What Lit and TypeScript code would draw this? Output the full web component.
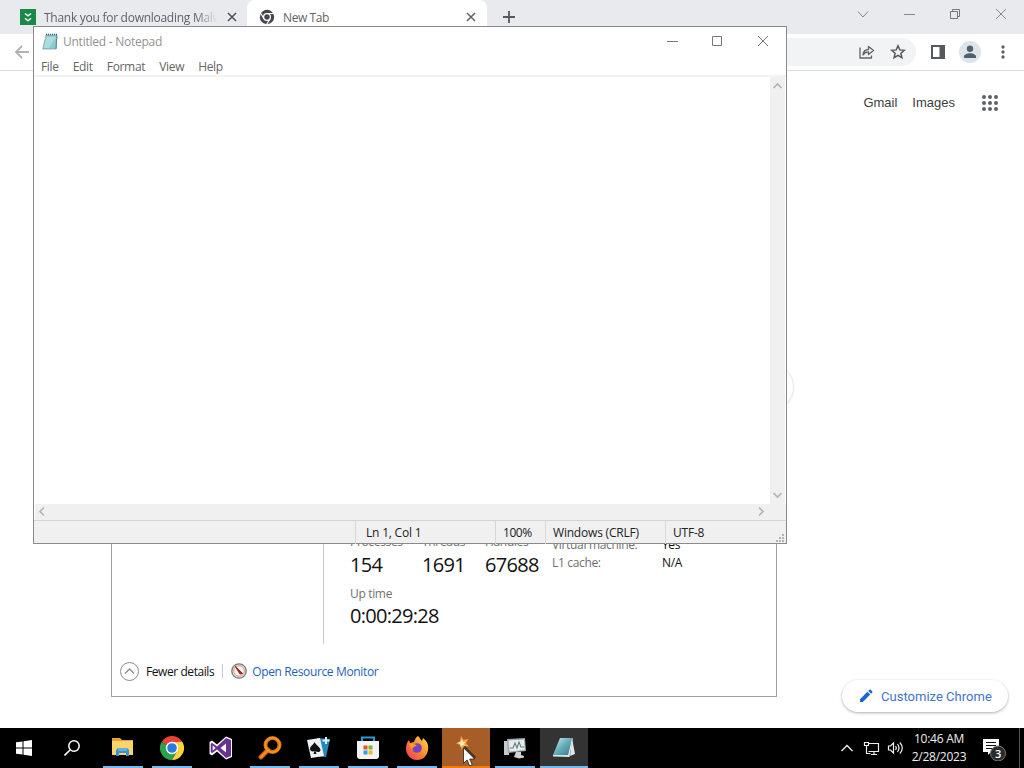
import { LitElement, html, svg, css } from "lit";
import { customElement } from "lit/decorators.js";

const ui = css`
  :host { display: block; box-sizing: border-box; font-family: "Open Sans", "Noto Sans", sans-serif; font-size: 12px; letter-spacing: -0.35px; white-space: nowrap; }
  * { box-sizing: border-box; }
  svg { display: block; flex: none; }
`;

@customElement("browser-window")
class BrowserWindow extends LitElement {
  static styles = [ui, css`
    :host { display: flex; flex-direction: column; background: #fff; height: 728px; }
    .tabs { display: flex; height: 34px; background: #e8eaed; color: #5f6368; align-items: stretch; }
    .tab { display: flex; align-items: center; width: 247px; padding: 0 10px 0 20px; }
    .tab.on { width: 240px; background: #fff; border-radius: 8px 8px 0 0; padding: 0 11px 0 12px; }
    .label { flex: 1; margin: 0 10px 0 8px; overflow: hidden; letter-spacing: -0.4px; }
    .long { letter-spacing: -0.27px; -webkit-mask-image: linear-gradient(90deg, #000 88%, transparent); }
    .plus { margin: 10px 0 0 15px; }
    .controls { display: flex; margin: 8px 17px 0 auto; gap: 34px; }
    .toolbar { display: flex; align-items: center; height: 37px; border-bottom: 1px solid #dadce0; padding: 0 17px 0 14px; }
    .omni { display: flex; align-items: center; justify-content: flex-end; gap: 14px; flex: 1; height: 28px; border-radius: 14px; background: #f1f3f4; margin: 0 14px 0 80px; padding-right: 10px; }
    .avatar { margin-left: 13px; }
    .dots { margin-left: 18px; }
    .links { display: flex; align-items: center; justify-content: flex-end; height: 64px; padding-right: 25px; font: 13px "Liberation Sans", Arial, sans-serif; letter-spacing: 0; color: #3c3e41; }
    .links span { margin: 0 15px 2px 0; }
    .links svg { margin-left: 11px; }
    .search { width: 564px; height: 46px; border: 1px solid #e6e7ea; box-shadow: 0 1px 2px rgba(0,0,0,.08); border-radius: 23px; margin: 229px 0 0 230px; }
    .pill { display: flex; align-items: center; gap: 7px; width: 166px; height: 32px; border-radius: 16px; background: #fff; box-shadow: 0 1px 3px rgba(0,0,0,.32); color: #4274cb; font: 13px Roboto, sans-serif; letter-spacing: .02px; margin: auto 16px 16px auto; padding-left: 16px; }
  `];
  render() {
    const x = (c: string) => svg`<path d="M1 1l8 8M9 1l-8 8" stroke=${c} stroke-width="1.500"/>`;
    return html`
      <div class="tabs">
        <div class="tab">
          <svg width="16" height="16"><path fill="#178a49" d="M0 0h16v16H0z"/><path fill="none" stroke="#fff" stroke-width="1.500" d="M5 4.500l3 2.300 3-2.300M5 9.200l3 2.600 3-2.600"/></svg>
          <span class="label long">Thank you for downloading Malw</span>
          <svg width="10" height="10">${x("#4d5156")}</svg>
        </div>
        <div class="tab on">
          <svg width="16" height="16" viewBox="0 0 16 16"><circle cx="8" cy="8" r="7.200" fill="#44474b"/><circle cx="8" cy="8" r="3.400" fill="none" stroke="#fff" stroke-width="1.300"/><path d="M8 4.500h7M4.900 9.800L1.500 4M11 9.800L7.600 15.500" stroke="#fff" stroke-width="1.200"/></svg>
          <span class="label">New Tab</span>
          <svg width="10" height="10">${x("#5f6368")}</svg>
        </div>
        <svg class="plus" width="14" height="14"><path d="M7 1v12M1 7h12" stroke="#55585c" stroke-width="1.800"/></svg>
        <div class="controls">
          <svg width="12" height="12"><path d="M1 3.500l5 5.500 5-5.500" fill="none" stroke="#85878a"/></svg>
          <svg width="12" height="12"><path d="M1 6.500h11" stroke="#85878a"/></svg>
          <svg width="12" height="12"><path d="M1.500 3.500h7v7h-7zM3.500 3.500v-2h7v7h-2" fill="none" stroke="#77797c"/></svg>
          <svg width="12" height="12"><path d="M1 1l10 10M11 1L1 11" stroke="#85878a"/></svg>
        </div>
      </div>
      <div class="toolbar">
        <svg width="16" height="16"><path d="M15 8H2M8 2L2 8l6 6" fill="none" stroke="#afb1b4" stroke-width="1.800"/></svg>
        <div class="omni">
          <svg width="18" height="16" viewBox="0 0 18 16"><path d="M2 3.500V14h11.500v-2.500M5 11c.3-3.800 2.300-5.500 5.500-5.500V2.500L15.500 6.500l-5 4V7.900C8 7.900 6.300 8.700 5 11z" fill="none" stroke="#5f6368" stroke-width="1.300" stroke-linejoin="round"/></svg>
          <svg width="16" height="16" viewBox="0 0 16 16"><path d="M8 1.800l1.800 4.100 4.500.4-3.400 3 1 4.400L8 11.400l-3.900 2.300 1-4.400-3.400-3 4.500-.4z" fill="none" stroke="#55585c" stroke-width="1.500"/></svg>
        </div>
        <svg width="16" height="16"><path d="M2 2h12v12H2z" fill="none" stroke="#55585c" stroke-width="2"/><path d="M9.500 2H14v12H9.500z" fill="#55585c"/></svg>
        <svg class="avatar" width="22" height="22"><circle cx="11" cy="11" r="11" fill="#dee5ea"/><circle cx="11" cy="7.700" r="3.200" fill="#50606e"/><path d="M5 17v-1.500c0-2 3-3.300 6-3.300s6 1.300 6 3.300V17z" fill="#50606e"/></svg>
        <svg class="dots" width="8" height="16" fill="#5f6368"><circle cx="4" cy="3" r="1.700"/><circle cx="4" cy="8" r="1.700"/><circle cx="4" cy="13" r="1.700"/></svg>
      </div>
      <div class="links"><span>Gmail</span><span>Images</span>
        <svg width="18" height="18" fill="#5f6368">${[3, 9, 15].map(y => [3, 9, 15].map(cx => svg`<circle cx=${cx} cy=${y} r="2"/>`))}</svg>
      </div>
      <div class="search"></div>
      <div class="pill"><svg width="16" height="16"><path d="M2 14v-2.800l7.400-7.400 2.800 2.800L4.800 14zM10.300 2.900l1.100-1.100c.4-.4.900-.4 1.300 0l1.500 1.500c.4.4.4.900 0 1.300l-1.100 1.100z" fill="#1967d2"/></svg>Customize Chrome</div>`;
  }
}

@customElement("task-manager")
class TaskManager extends LitElement {
  static styles = [ui, css`
    :host { display: flex; flex-direction: column; background: #fff; border: 1px solid #a0a0a0; color: #111; }
    .main { display: flex; height: 144px; }
    .side { width: 212px; border-right: 1px solid #c8c8c8; }
    .stats { display: grid; grid-template-columns: 72px 63px 67px; grid-template-rows: 18px 34px 17px 26px; margin: 33px 0 0 26px; line-height: 16px; }
    .k { color: #707070; letter-spacing: -.33px; }
    .stats .k { padding-top: 1px; }
    .v { font-size: 20px; line-height: 24px; padding-top: 2px; letter-spacing: -.7px; }
    .stats .wide { grid-column: 1 / 4; }
    .info { display: grid; grid-template-columns: 110px 60px; grid-auto-rows: 18px; margin-top: 36px; line-height: 18px; align-content: start; }
    .foot { display: flex; align-items: center; height: 52px; padding: 2px 0 0 8px; }
    .sep { width: 1px; height: 14px; background: #c9c9c9; margin: 0 8px; }
    .link { color: #1d63b5; margin-left: 5px; letter-spacing: -.36px; }
    .few { margin-left: 7px; letter-spacing: -.43px; }
  `];
  render() {
    return html`
      <div class="main">
        <div class="side"></div>
        <div class="stats">
          <span class="k">Processes</span><span class="k">Threads</span><span class="k">Handles</span>
          <span class="v">154</span><span class="v">1691</span><span class="v">67688</span>
          <span class="k wide">Up time</span><span class="v wide">0:00:29:28</span>
        </div>
        <div class="info"><span class="k">Virtual machine:</span><span>Yes</span><span class="k">L1 cache:</span><span>N/A</span></div>
      </div>
      <div class="foot">
        <svg width="19" height="19"><circle cx="9.500" cy="9.500" r="9" fill="none" stroke="#8c8c8c"/><path d="M5 11.500l4.500-4.500 4.500 4.500" fill="none" stroke="#8c8c8c" stroke-width="1.300"/></svg>
        <span class="few">Fewer details</span><span class="sep"></span>
        <svg width="16" height="16"><circle cx="8" cy="8" r="7.200" fill="#eee5df" stroke="#777" stroke-width="1.300"/><circle cx="8" cy="8" r="5.300" fill="#f8f4ef" stroke="#c69e8c"/><path d="M4.300 3.500L11.500 10.500 9 11z" fill="#a41b1b" stroke="#a41b1b"/></svg>
        <span class="link">Open Resource Monitor</span>
      </div>`;
  }
}

@customElement("notepad-window")
class NotepadWindow extends LitElement {
  static styles = [ui, css`
    :host { display: flex; flex-direction: column; background: #fff; border: 1px solid #8a8a8a; color: #666; }
    .title { display: flex; height: 30px; align-items: center; padding: 0 17px 2px 8px; color: #929292; }
    .title span { margin: 0 auto 0 5px; letter-spacing: -.25px; }
    .title svg + svg { margin-left: 34px; }
    .title .min { margin-right: -1px; }
    .menu { display: flex; gap: 14px; height: 20px; padding-left: 7px; line-height: 20px; letter-spacing: -.32px; border-bottom: 2px solid #f3f3f3; }
    .body { display: grid; grid-template-columns: 1fr 16px; grid-template-rows: 427px 16px; flex: 1; padding: 0 0 0 1px; }
    .bar { display: flex; background: #f0f0f0; justify-content: space-between; }
    .v { flex-direction: column; padding: 4px 2px 4px 1px; margin-right: 1px; }
    .h { grid-column: 1 / 3; align-items: center; padding: 0 20px 2px 2px; }
    .status { display: grid; grid-template-columns: 322px 140px 50px 120px 1fr; height: 23px; border-top: 1px solid #d4d4d4; background: #f0f0f0; color: #222; line-height: 23px; letter-spacing: -.2px; }
    .status > * { padding-left: 7px; border-right: 1px solid #d7d7d7; }
    .status .pos { padding-left: 10px; }
    .status .zoom { letter-spacing: -.45px; }
    .status .end { display: flex; border: 0; justify-content: space-between; }
    .end svg { align-self: flex-end; }
  `];
  render() {
    const a = (d: string) => svg`<path d=${d} fill="none" stroke="#b4b4b4" stroke-width="1.700"/>`;
    return html`
      <div class="title">
        <svg width="16" height="17" viewBox="0 0 16 17"><path d="M4 2h11l-1 14H.8z" fill="#8accd0" stroke="#7ba9ae" stroke-width=".8"/><path d="M4 4h10L7 15H2z" fill="#b9e3e4" opacity=".7"/><path d="M14.800 2.500L14 16" stroke="#5f888d"/><path d="M4 1.500h11" stroke="#455" stroke-width="1.500" stroke-dasharray="1 1"/></svg>
        <span>Untitled - Notepad</span>
        <svg class="min" width="12" height="12"><path d="M1 6.500h11" stroke="#777"/></svg>
        <svg width="12" height="12"><path d="M1.500 1.500h9v9h-9z" fill="none" stroke="#777"/></svg>
        <svg width="12" height="12"><path d="M1 1l10 10M11 1L1 11" stroke="#777"/></svg>
      </div>
      <div class="menu"><span>File</span><span>Edit</span><span>Format</span><span>View</span><span>Help</span></div>
      <div class="body">
        <div></div>
        <div class="bar v"><svg width="12" height="9">${a("M2.500 7l4-4 4 4")}</svg><svg width="12" height="9">${a("M2.500 2l4 4 4-4")}</svg></div>
        <div class="bar h"><svg width="9" height="12">${a("M7 2.500L3 6.500l4 4")}</svg><svg width="9" height="12">${a("M2 2.500l4 4-4 4")}</svg></div>
      </div>
      <div class="status"><span></span><span class="pos">Ln 1, Col 1</span><span class="zoom">100%</span><span>Windows (CRLF)</span>
        <span class="end">UTF-8<svg width="10" height="10" fill="#b4b4b4"><path d="M6 0h2v2H6zM3 3h2v2H3zM6 3h2v2H6zM0 6h2v2H0zM3 6h2v2H3zM6 6h2v2H6z"/></svg></span>
      </div>`;
  }
}

const apps = [
  { state: "run", icon: svg`<path d="M1 2h8l2 2h11v15H1z" fill="#e0a63a"/><path d="M1 5h21v14H1z" fill="#fbd469"/><path d="M5 20v-6l2-2h9l2 2v6h-3v-3H8v3z" fill="#3d91d1"/><path d="M7 12h9v3H7z" fill="#5eb1e4"/>` },
  { state: "run", icon: svg`<path d="M12 12L1.600 6A12 12 0 0 1 22.400 6z" fill="#e94335"/><path d="M12 12L1.600 6A12 12 0 0 0 12 24l5.200-9z" fill="#2ba24c"/><path d="M12 6h10.400A12 12 0 0 1 12 24l5.200-9z" fill="#fdd23f"/><circle cx="12" cy="12" r="6.200" fill="#fff"/><circle cx="12" cy="12" r="4.800" fill="#2f78de"/>` },
  { state: "", icon: svg`<path d="M17 .5l6 2.500v18l-6 2.500-9-8-5 4-2.500-1.500v-12L3 4.500l5 4z" fill="#fff"/><path d="M17 2l5 2v16l-5 2-9-8.500-5 3.800L1.700 16V8L3 6.700l5 3.800zM17 7.500L11.500 12l5.500 4.500zM3.700 9.500v5L6.500 12z" fill="#68338e" fill-rule="evenodd"/>` },
  { state: "run", icon: svg`<path d="M10 14l-7 7" stroke="#b94d08" stroke-width="5" stroke-linecap="round"/><circle cx="14.500" cy="9" r="7" fill="none" stroke="#d66c0b" stroke-width="4"/><path d="M10 14l-7 7" stroke="#f48b20" stroke-width="3" stroke-linecap="round"/><circle cx="14.500" cy="9" r="7.200" fill="none" stroke="#f79325" stroke-width="2"/>` },
  { state: "run", icon: svg`<path d="M10 2l13 1-4 18-12-1z" fill="#2389bd"/><path d="M0 4l13-2 4 18-13 2z" fill="#eef2f4"/><path d="M7.500 6c1 3 6 5 6 8 0 2-3 3-5 1l1 3h-3l1-3c-2 1-4.500 0-4.500-2 0-3 3.500-4 4.500-7z" fill="#111"/><path d="M19 1v7M15.500 4.500h7" stroke="#d9f5ff" stroke-width="2"/>` },
  { state: "run", icon: svg`<path d="M6 6V1.500h12V6" fill="none" stroke="#279bd5" stroke-width="2"/><path d="M1 5h22v15q0 3-3 3H4q-3 0-3-3z" fill="#f1f3f5"/><path d="M7.500 9.500h4V13.500h-4z" fill="#e9532d"/><path d="M12.500 9.500h4v4h-4z" fill="#7bb62d"/><path d="M7.500 14.500h4v4h-4z" fill="#28a1df"/><path d="M12.500 14.500h4v4h-4z" fill="#f5b72b"/>` },
  { state: "run", icon: svg`<defs><linearGradient id="ff" x1="1" y1="0" x2="0" y2="1"><stop stop-color="#ffe34b"/><stop offset=".5" stop-color="#ff872a"/><stop offset="1" stop-color="#f02f65"/></linearGradient></defs><path d="M13 0c2 2 2 3 4 5l1-3c4 3 6 7 5 12-1 6-5 10-11 10S1 19 1 13c0-4 1-7 3-9l1 3 4-1c1-3 2-5 4-6z" fill="url(#ff)"/><circle cx="12" cy="12" r="4.800" fill="#7542c7"/><path d="M4 8c4-1 6 0 8 2-3 0-4 1-5 4z" fill="#ff9e22"/>` },
  { state: "alert", icon: svg`<path d="M10 11l11 11" stroke="#493325" stroke-width="3"/><path d="M7 0l2.500 4 5-1-2.500 4 3 3.500-4.500-.5-3 4-1-5-4.500-1.500L6 5z" fill="#f79f41"/><path d="M8 3l1 3 3-.500-2 2.200 1 2-2.500-.7-2 2-.3-2.800L4 7l2.500-1z" fill="#fff0bf"/>` },
  { state: "run", icon: svg`<path d="M1 5h5v14H1z" fill="#c5cacb"/><path d="M4 3l18-1 1 13-18 2z" fill="#9fa7aa"/><path d="M5.500 4.500l15.500-1 .7 10.500-15.200 1.500z" fill="#e6ecec"/><path d="M7 12h3l2-5 2 5 2-6 2 5h3" fill="none" stroke="#617d84" stroke-width="1.100"/><path d="M13 16h5v3l3 1v1.500l-5 1-5-1.500z" fill="#d0d4d5"/>` },
  { state: "on", icon: svg`<defs><linearGradient id="np" x1="0" y1="0" x2="1" y2="1"><stop stop-color="#d7eef3"/><stop offset=".5" stop-color="#65aeb9"/><stop offset="1" stop-color="#327c8c"/></linearGradient></defs><path d="M20 2l3 16-5 2z" fill="#e2e7e8"/><path d="M8 2h12l-4 17H1z" fill="url(#np)"/><path d="M1 19h15l4-17 .8.500L17.500 21 1 20.500z" fill="#dce5e7"/>` },
];

@customElement("task-bar")
class TaskBar extends LitElement {
  static styles = [ui, css`
    :host { display: flex; height: 40px; background: #000; color: #eee; }
    .cell { display: flex; width: 48px; align-items: center; justify-content: center; }
    .apps { display: flex; gap: 1px; margin-left: 3px; }
    .app { display: grid; grid-template-rows: 38px 2px; width: 48px; place-items: center; }
    .app svg { margin-top: 2px; }
    .app i { width: 40px; height: 2px; }
    .run i { background: #76b9ed; }
    .on { background: #333; }
    .on i { width: 48px; background: #76b9ed; }
    .alert { background: #a65d27; }
    .alert i { width: 48px; background: #f07a13; }
    .tray { display: flex; align-items: center; margin-left: auto; }
    .net { margin-left: 10px; }
    .vol { margin-left: 7px; }
    .clock { width: 62px; margin-left: 4px; text-align: center; line-height: 18px; letter-spacing: -.25px; }
    .note { margin-left: 12px; }
    .edge { width: 5px; height: 40px; border-left: 1px solid #555; margin-left: 11px; }
  `];
  render() {
    return html`
      <div class="cell"><svg width="16" height="16" fill="#fff"><path d="M0 2.300l6.500-.9v6.100H0zM7.500 1.200L16 0v7.500H7.500zM0 8.500h6.500v6.100L0 13.700zM7.500 8.500H16V16l-8.500-1.200z"/></svg></div>
      <div class="cell"><svg width="16" height="16"><circle cx="10" cy="6" r="5.200" fill="none" stroke="#fff" stroke-width="1.500"/><path d="M6.300 9.700L.5 15.500" stroke="#fff" stroke-width="1.600"/></svg></div>
      <div class="apps">${apps.map(a => html`<div class="app ${a.state}"><svg width="24" height="24" viewBox="0 0 24 24">${a.icon}</svg><i></i></div>`)}</div>
      <div class="tray">
        <svg width="12" height="8"><path d="M.5 7L6 1.500 11.500 7" fill="none" stroke="#eee" stroke-width="1.400"/></svg>
        <svg class="net" width="17" height="15"><path d="M5.500 2.500h10v8h-10M8 13.500h6M11 10.500v3M1.500 1.500h4v3h-4zM3.500 4.500v8h4" fill="none" stroke="#eee" stroke-width="1.200"/></svg>
        <svg class="vol" width="17" height="14"><path d="M1.500 5h2l3-3v10l-3-3h-2z" fill="none" stroke="#eee" stroke-width="1.200"/><path d="M8.500 5q1.500 2 0 4M10.500 3q3 4 0 8M12.800 1.500q5 5.500 0 11" fill="none" stroke="#eee" stroke-width="1.200"/></svg>
        <div class="clock">10:46 AM<br>2/28/2023</div>
        <svg class="note" width="26" height="26" viewBox="0 0 26 26"><path d="M1 4h16v13H9l-3 3v-3H1z" fill="#fff"/><path d="M4 7.500h10M4 10.500h10M4 13.500h7" stroke="#111"/><circle cx="16" cy="18.500" r="7.500" fill="#2b2b2b" stroke="#777"/><text x="13" y="22.500" fill="#fff" font-size="11" font-weight="600">3</text></svg>
        <div class="edge"></div>
      </div>`;
  }
}

@customElement("app-root")
class AppRoot extends LitElement {
  static styles = css`
    :host { display: block; position: relative; width: 1024px; height: 768px; overflow: hidden; background: #fff; }
    .manager { position: absolute; left: 111px; top: 499px; width: 666px; height: 198px; }
    .notepad { position: absolute; left: 33px; top: 26px; width: 754px; height: 518px; }
    .cursor { position: absolute; left: 463px; top: 747px; }
  `;
  render() {
    return html`
      <browser-window></browser-window>
      <task-manager class="manager"></task-manager>
      <notepad-window class="notepad"></notepad-window>
      <task-bar></task-bar>
      <svg class="cursor" width="13" height="20"><path d="M.5.800v15.500l3.600-3.400 2.500 6 2.600-1.100-2.500-5.800h5z" fill="#fff" stroke="#222" stroke-width=".8"/></svg>`;
  }
}
